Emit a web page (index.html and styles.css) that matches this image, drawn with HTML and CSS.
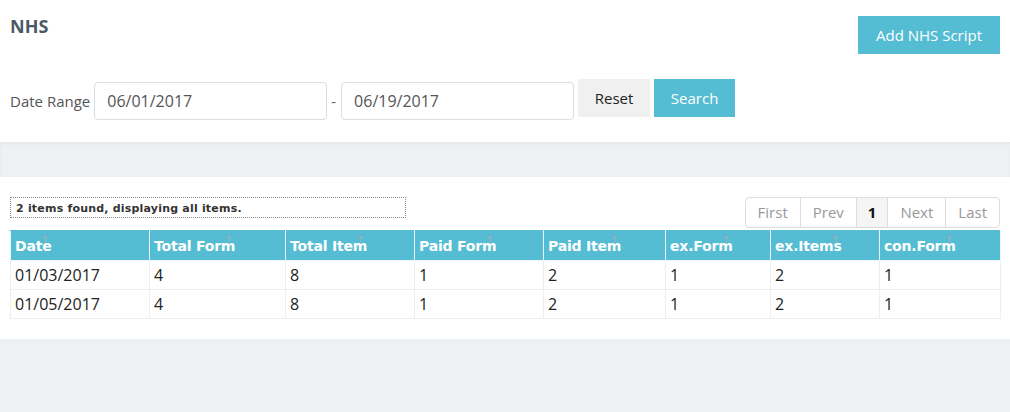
FILE: index.html
```html
<!DOCTYPE html>
<html>
<head>
<meta charset="utf-8">
<link rel="stylesheet" href="styles.css">
</head>
<body>
<section class="panel top">
  <div class="head-row">
    <h1 class="title">NHS</h1>
    <button class="btn btn-info btn-add">Add NHS Script</button>
  </div>
  <div class="filter-row">
    <label class="label">Date Range</label>
    <input class="date-input" type="text" value="06/01/2017">
    <span class="dash">-</span>
    <input class="date-input" type="text" value="06/19/2017">
    <button class="btn btn-light">Reset</button>
    <button class="btn btn-info btn-search">Search</button>
  </div>
</section>
<div class="band"></div>
<section class="panel list">
  <div class="list-top">
    <div class="summary">2 items found, displaying all items.</div>
    <ul class="pager">
      <li class="pg">First</li>
      <li class="pg">Prev</li>
      <li class="pg current">1</li>
      <li class="pg">Next</li>
      <li class="pg">Last</li>
    </ul>
  </div>
  <table class="grid">
    <colgroup>
      <col class="c1"><col class="c2"><col class="c3"><col class="c4"><col class="c5"><col class="c6"><col class="c7"><col class="c8">
    </colgroup>
    <thead>
      <tr>
        <th><span class="sort">Date</span></th>
        <th><span class="sort">Total Form</span></th>
        <th><span class="sort">Total Item</span></th>
        <th><span class="sort">Paid Form</span></th>
        <th><span class="sort">Paid Item</span></th>
        <th><span class="sort">ex.Form</span></th>
        <th><span class="sort">ex.Items</span></th>
        <th><span class="sort">con.Form</span></th>
      </tr>
    </thead>
    <tbody>
      <tr><td>01/03/2017</td><td>4</td><td>8</td><td>1</td><td>2</td><td>1</td><td>2</td><td>1</td></tr>
      <tr><td>01/05/2017</td><td>4</td><td>8</td><td>1</td><td>2</td><td>1</td><td>2</td><td>1</td></tr>
    </tbody>
  </table>
</section>
</body>
</html>
```

FILE: styles.css
```css
* { box-sizing: border-box; }
body {
  margin: 0;
  background: #eef1f4;
  font-family: "Open Sans", "Noto Sans", sans-serif;
  color: #333;
}
.panel { background: #fff; }
.top { padding: 14px 10px 22px 10px; }
.head-row {
  display: flex;
  justify-content: space-between;
  align-items: flex-start;
}
.title {
  margin: 0;
  font-size: 18px;
  line-height: 24px;
  font-weight: 700;
  color: #4a5868;
}
.btn {
  border: none;
  font-family: "Open Sans", "Noto Sans", sans-serif;
  font-size: 15px;
  height: 38px;
  padding: 0;
  cursor: pointer;
}
.btn-info { background: #54bcd3; color: #fff; }
.btn-light { background: #f0f0f0; color: #222; width: 72px; margin-left: 4px; }
.btn-add { width: 142px; margin-top: 2px; }
.btn-search { width: 81px; margin-left: 4px; }
.filter-row {
  display: flex;
  align-items: flex-start;
  margin-top: 25px;
}
.label {
  font-size: 15px;
  color: #555;
  line-height: 38px;
  margin-top: 3px;
  margin-right: 4px;
}
.date-input {
  width: 233px;
  height: 38px;
  margin-top: 3px;
  border: 1px solid #ddd;
  border-radius: 4px;
  padding: 0 12px;
  font-family: "Open Sans", "Noto Sans", sans-serif;
  font-size: 16px;
  color: #555;
  outline: none;
}
.dash {
  font-size: 15px;
  color: #666;
  line-height: 38px;
  margin: 3px 5px 0 4px;
}
.band {
  height: 35px;
  box-shadow: inset 0 2px 3px rgba(0,0,0,0.04);
}
.list { padding: 20px 10px 20px 10px; }
.list-top {
  display: flex;
  justify-content: space-between;
  align-items: flex-start;
}
.summary {
  width: 396px;
  height: 21px;
  border: 1px dotted #888;
  padding: 4px 0 0 5px;
  font-family: "DejaVu Sans", Verdana, sans-serif;
  font-size: 11px;
  font-weight: 700;
  line-height: 13px;
  color: #333;
  letter-spacing: 0.2px;
}
.pager {
  display: flex;
  list-style: none;
  margin: 0;
  padding: 0;
  border: 1px solid #ddd;
  border-radius: 4px;
  height: 31px;
}
.pg {
  padding: 0 12px;
  line-height: 29px;
  font-size: 15px;
  color: #999;
  border-left: 1px solid #ddd;
}
.pg:first-child { border-left: none; padding-left: 12px; }
.pg.current {
  background: #f5f5f5;
  color: #111;
  font-weight: 700;
  padding: 0 11px;
}
.grid {
  margin-top: 2px;
  width: 990px;
  border-collapse: collapse;
  table-layout: fixed;
}
.c1 { width: 139px; }
.c2 { width: 136px; }
.c3 { width: 129px; }
.c4 { width: 129px; }
.c5 { width: 122px; }
.c6 { width: 105px; }
.c7 { width: 109px; }
.c8 { width: 121px; }
.grid th {
  background: #54bcd3;
  color: #fff;
  text-align: left;
  height: 30px;
  padding: 0 4px;
  font-family: "DejaVu Sans", Verdana, sans-serif;
  font-size: 14px;
  font-weight: 700;
  letter-spacing: -0.2px;
  border: 1px solid #eef6f8;
  border-top-color: #54bcd3;
}
.sort { position: relative; }
.sort::after {
  content: "\2191";
  position: absolute;
  right: 3px;
  top: -4px;
  font-size: 10px;
  font-weight: 400;
  color: rgba(180,170,175,0.9);
}
.grid td {
  height: 29px;
  padding: 0 4px;
  font-size: 16px;
  color: #222;
  border: 1px solid #eee;
}
```
